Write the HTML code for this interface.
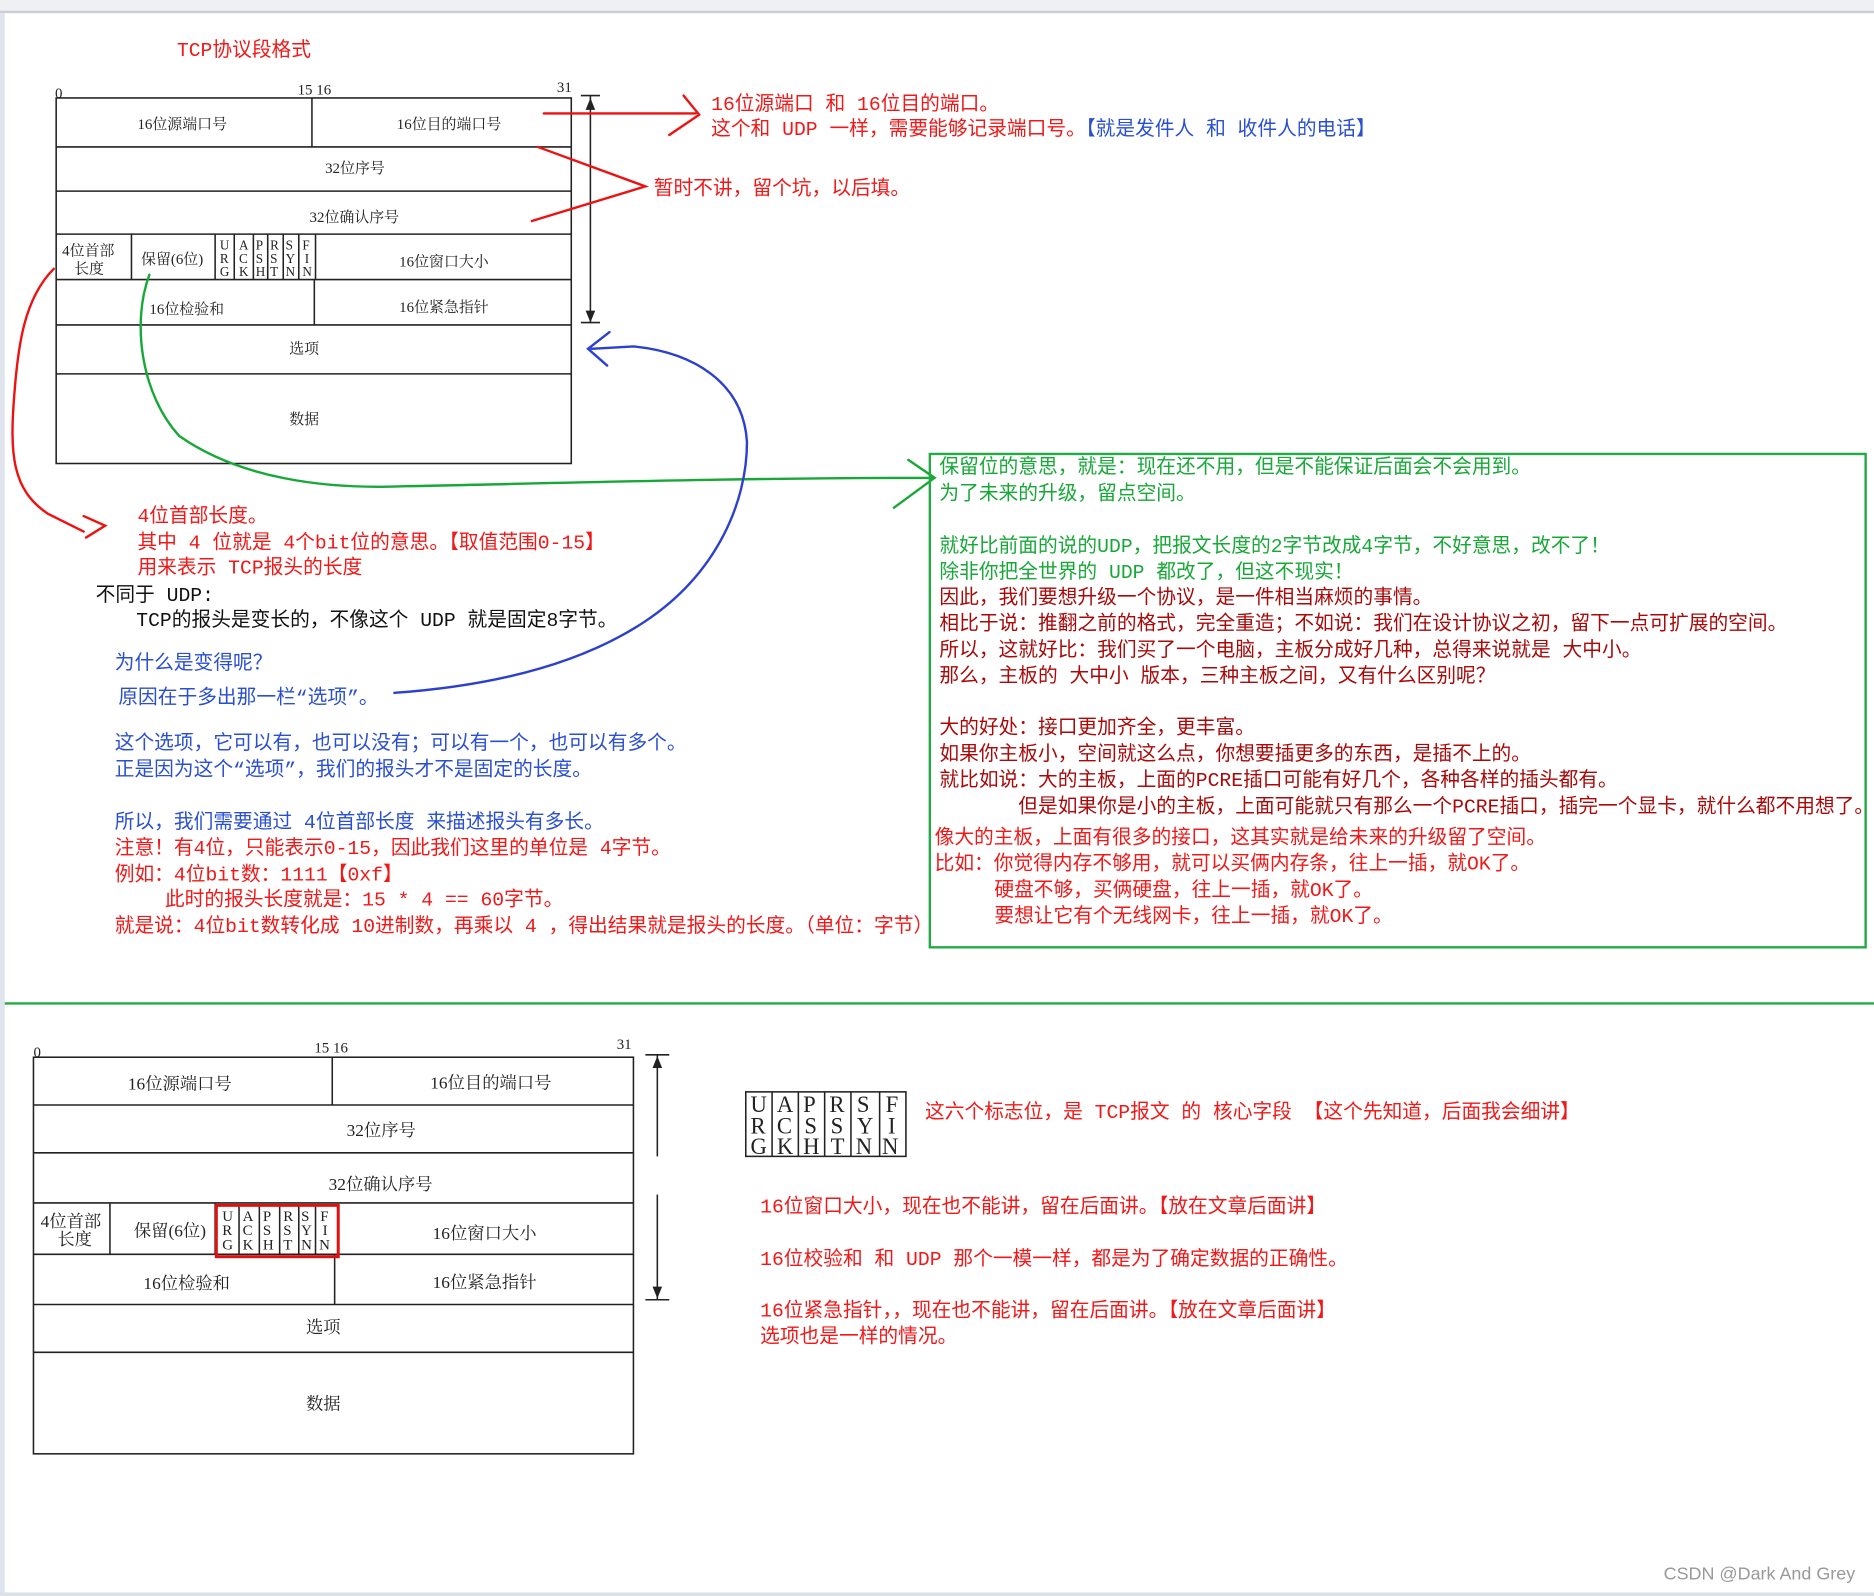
<!DOCTYPE html>
<html><head><meta charset="utf-8">
<style>
html,body{margin:0;padding:0;background:#fff;overflow:hidden}
#wrap{position:absolute;left:0;top:0;width:1568px;height:1336px;transform:scale(1.19515,1.1946);transform-origin:0 0;background:#fff;font-family:"Liberation Mono","Noto Sans CJK SC",monospace;font-size:16.5px;}
.t{position:absolute;white-space:pre;line-height:22px;height:22px}
.r{color:#f01818}.b{color:#2a4fd0}.g{color:#18a838}.k{color:#111}.d{color:#a80a0a}
svg{position:absolute;left:0;top:0}
.dg{font-family:"Liberation Serif","Noto Serif CJK SC",serif;fill:#222}
</style></head><body><div id="wrap">
<div style="position:absolute;left:0;top:0;width:1568px;height:9px;background:#eef0f4;border-bottom:2px solid #c9ced8"></div>
<div style="position:absolute;left:0;top:11px;width:4px;height:1325px;background:#dfe4ee"></div>

<svg width="1568" height="1336" viewBox="0 0 1568 1336">
<g stroke="#222" stroke-width="1.3" fill="none">
<rect x="47" y="82" width="431" height="306"/>
<line x1="47" y1="123" x2="478" y2="123"/><line x1="47" y1="160" x2="478" y2="160"/>
<line x1="47" y1="196" x2="478" y2="196"/><line x1="47" y1="234" x2="478" y2="234"/>
<line x1="47" y1="272" x2="478" y2="272"/><line x1="47" y1="313" x2="478" y2="313"/>
<line x1="261" y1="82" x2="261" y2="123"/><line x1="263" y1="234" x2="263" y2="272"/>
<line x1="110" y1="196" x2="110" y2="234"/><line x1="180" y1="196" x2="180" y2="234"/>
<line x1="196" y1="196" x2="196" y2="234"/><line x1="212" y1="196" x2="212" y2="234"/>
<line x1="224" y1="196" x2="224" y2="234"/><line x1="237" y1="196" x2="237" y2="234"/>
<line x1="250" y1="196" x2="250" y2="234"/><line x1="264" y1="196" x2="264" y2="234"/>
<line x1="494" y1="80" x2="494" y2="270"/><line x1="486" y1="80" x2="502" y2="80"/><line x1="486" y1="270" x2="502" y2="270"/>
<rect x="28" y="885" width="502" height="332"/>
<line x1="28" y1="925" x2="530" y2="925"/><line x1="28" y1="965" x2="530" y2="965"/>
<line x1="28" y1="1007" x2="530" y2="1007"/><line x1="28" y1="1050" x2="530" y2="1050"/>
<line x1="28" y1="1092" x2="530" y2="1092"/><line x1="28" y1="1132" x2="530" y2="1132"/>
<line x1="278" y1="885" x2="278" y2="925"/><line x1="280" y1="1050" x2="280" y2="1092"/>
<line x1="92" y1="1007" x2="92" y2="1050"/><line x1="180" y1="1007" x2="180" y2="1050"/>
<line x1="200" y1="1010" x2="200" y2="1050"/><line x1="217" y1="1010" x2="217" y2="1050"/><line x1="234" y1="1010" x2="234" y2="1050"/><line x1="250" y1="1010" x2="250" y2="1050"/><line x1="264" y1="1010" x2="264" y2="1050"/>
<line x1="550" y1="883" x2="550" y2="968"/><line x1="550" y1="1000" x2="550" y2="1088"/>
<line x1="540" y1="883" x2="560" y2="883"/><line x1="540" y1="1088" x2="560" y2="1088"/>
<rect x="624" y="914" width="134" height="54"/>
<line x1="646" y1="914" x2="646" y2="968"/><line x1="668" y1="914" x2="668" y2="968"/><line x1="690" y1="914" x2="690" y2="968"/><line x1="712" y1="914" x2="712" y2="968"/><line x1="736" y1="914" x2="736" y2="968"/>
</g>
<g fill="#222"><path d="M494 82 l-4 10 h8z"/><path d="M494 270 l-4 -10 h8z"/><path d="M550 884 l-4 10 h8z"/><path d="M550 1087 l-4 -10 h8z"/></g>
<rect x="181" y="1009" width="102" height="43" fill="none" stroke="#e01010" stroke-width="2.5"/>
<g class="dg" style="font-size:12.5px">
<text x="46" y="82">0</text><text x="249" y="79">15 16</text><text x="466" y="77">31</text>
<text x="115" y="108">16位源端口号</text><text x="332" y="108">16位目的端口号</text>
<text x="272" y="145">32位序号</text><text x="259" y="186">32位确认序号</text>
<text x="52" y="214">4位首部</text><text x="62" y="229">长度</text><text x="118" y="221">保留(6位)</text>
<text x="334" y="223">16位窗口大小</text><text x="125" y="263">16位检验和</text><text x="334" y="261">16位紧急指针</text>
<text x="242" y="296">选项</text><text x="242" y="355">数据</text>
<text x="28" y="885">0</text><text x="263" y="881">15 16</text><text x="516" y="878">31</text>
</g>
<g class="dg" style="font-size:14.5px">
<text x="107" y="912">16位源端口号</text><text x="360" y="911">16位目的端口号</text>
<text x="290" y="951">32位序号</text><text x="275" y="996">32位确认序号</text>
<text x="34" y="1027">4位首部</text><text x="48" y="1042">长度</text><text x="112" y="1035">保留(6位)</text>
<text x="362" y="1037">16位窗口大小</text><text x="120" y="1079">16位检验和</text><text x="362" y="1078">16位紧急指针</text>
<text x="256" y="1116">选项</text><text x="256" y="1180">数据</text>
</g>
<g class="dg" style="font-size:11px">
<text x="184" y="209">U</text><text x="184" y="220">R</text><text x="184" y="231">G</text>
<text x="200" y="209">A</text><text x="200" y="220">C</text><text x="200" y="231">K</text>
<text x="214" y="209">P</text><text x="214" y="220">S</text><text x="214" y="231">H</text>
<text x="226" y="209">R</text><text x="226" y="220">S</text><text x="226" y="231">T</text>
<text x="239" y="209">S</text><text x="239" y="220">Y</text><text x="239" y="231">N</text>
<text x="253" y="209">F</text><text x="255" y="220">I</text><text x="253" y="231">N</text>
</g>
<g class="dg" style="font-size:12.5px">
<text x="186" y="1022">U</text><text x="186" y="1034">R</text><text x="186" y="1046">G</text>
<text x="203" y="1022">A</text><text x="203" y="1034">C</text><text x="203" y="1046">K</text>
<text x="220" y="1022">P</text><text x="220" y="1034">S</text><text x="220" y="1046">H</text>
<text x="237" y="1022">R</text><text x="237" y="1034">S</text><text x="237" y="1046">T</text>
<text x="252" y="1022">S</text><text x="252" y="1034">Y</text><text x="252" y="1046">N</text>
<text x="268" y="1022">F</text><text x="270" y="1034">I</text><text x="267" y="1046">N</text>
</g>
<g class="dg" style="font-size:19px">
<text x="628" y="931">U</text><text x="628" y="949">R</text><text x="628" y="966">G</text>
<text x="650" y="931">A</text><text x="650" y="949">C</text><text x="650" y="966">K</text>
<text x="672" y="931">P</text><text x="673" y="949">S</text><text x="672" y="966">H</text>
<text x="694" y="931">R</text><text x="695" y="949">S</text><text x="695" y="966">T</text>
<text x="717" y="931">S</text><text x="717" y="949">Y</text><text x="716" y="966">N</text>
<text x="741" y="931">F</text><text x="743" y="949">I</text><text x="738" y="966">N</text>
</g>
<g fill="none" stroke-width="2" stroke-linecap="round">
<path d="M455 95 H582 M572 80 L585 96 L560 113" stroke="#ee1111"/>
<path d="M450 123 L540 156 L445 185" stroke="#ee1111"/>
<path d="M45 225 C20 250 15 290 12 330 C8 380 10 410 40 430 L70 445 M70 432 L88 440 L72 450" stroke="#ee1111"/>
<path d="M125 230 C110 270 118 330 150 365 C200 400 270 410 340 407 C450 405 600 400 780 400 M760 385 L782 400 L748 425" stroke="#18a838"/>
<path d="M330 580 C400 575 480 560 540 520 C600 480 625 420 625 370 C622 320 580 295 530 290 L495 292 M510 278 L492 292 L508 306" stroke="#2b3fd0"/>
</g>
<rect x="778" y="380" width="783" height="413" fill="none" stroke="#22aa44" stroke-width="2"/>
<line x1="4" y1="840" x2="1568" y2="840" stroke="#22aa44" stroke-width="2"/>
</svg>

<div class="t r" style="left:148px;top:32px">TCP协议段格式</div>
<div class="t r" style="left:595px;top:77px">16位源端口 和 16位目的端口。</div>
<div class="t r" style="left:595px;top:98px">这个和 UDP 一样，需要能够记录端口号。<span class="b">【就是发件人 和 收件人的电话】</span></div>
<div class="t r" style="left:547px;top:148px">暂时不讲，留个坑，以后填。</div>
<div class="t r" style="left:115px;top:422px">4位首部长度。</div>
<div class="t r" style="left:115px;top:444px">其中 4 位就是 4个bit位的意思。【取值范围0-15】</div>
<div class="t r" style="left:115px;top:465px">用来表示 TCP报头的长度</div>
<div class="t k" style="left:80px;top:488px">不同于 UDP:</div>
<div class="t k" style="left:114px;top:509px">TCP的报头是变长的，不像这个 UDP 就是固定8字节。</div>
<div class="t b" style="left:96px;top:545px">为什么是变得呢？</div>
<div class="t b" style="left:99px;top:574px">原因在于多出那一栏“选项”。</div>
<div class="t b" style="left:96px;top:612px">这个选项，它可以有，也可以没有；可以有一个，也可以有多个。</div>
<div class="t b" style="left:96px;top:634px">正是因为这个“选项”，我们的报头才不是固定的长度。</div>
<div class="t b" style="left:96px;top:678px">所以，我们需要通过 4位首部长度 来描述报头有多长。</div>
<div class="t r" style="left:96px;top:700px">注意！有4位，只能表示0-15，因此我们这里的单位是 4字节。</div>
<div class="t r" style="left:96px;top:722px">例如：4位bit数：1111【0xf】</div>
<div class="t r" style="left:138px;top:743px">此时的报头长度就是：15 * 4 == 60字节。</div>
<div class="t r" style="left:96px;top:765px">就是说：4位bit数转化成 10进制数，再乘以 4 ，得出结果就是报头的长度。（单位：字节）</div>

<div class="t g" style="left:786px;top:381px">保留位的意思，就是：现在还不用，但是不能保证后面会不会用到。</div>
<div class="t g" style="left:786px;top:403px">为了未来的升级，留点空间。</div>
<div class="t g" style="left:786px;top:447px">就好比前面的说的UDP，把报文长度的2字节改成4字节，不好意思，改不了！</div>
<div class="t g" style="left:786px;top:469px">除非你把全世界的 UDP 都改了，但这不现实！</div>
<div class="t d" style="left:786px;top:490px">因此，我们要想升级一个协议，是一件相当麻烦的事情。</div>
<div class="t d" style="left:786px;top:512px">相比于说：推翻之前的格式，完全重造；不如说：我们在设计协议之初，留下一点可扩展的空间。</div>
<div class="t d" style="left:786px;top:534px">所以，这就好比：我们买了一个电脑，主板分成好几种，总得来说就是 大中小。</div>
<div class="t d" style="left:786px;top:556px">那么，主板的 大中小 版本，三种主板之间，又有什么区别呢？</div>
<div class="t d" style="left:786px;top:599px">大的好处：接口更加齐全，更丰富。</div>
<div class="t d" style="left:786px;top:621px">如果你主板小，空间就这么点，你想要插更多的东西，是插不上的。</div>
<div class="t d" style="left:786px;top:643px">就比如说：大的主板，上面的PCRE插口可能有好几个，各种各样的插头都有。</div>
<div class="t d" style="left:852px;top:665px">但是如果你是小的主板，上面可能就只有那么一个PCRE插口，插完一个显卡，就什么都不用想了。</div>
<div class="t r" style="left:782px;top:691px">像大的主板，上面有很多的接口，这其实就是给未来的升级留了空间。</div>
<div class="t r" style="left:782px;top:713px">比如：你觉得内存不够用，就可以买俩内存条，往上一插，就OK了。</div>
<div class="t r" style="left:832px;top:735px">硬盘不够，买俩硬盘，往上一插，就OK了。</div>
<div class="t r" style="left:832px;top:757px">要想让它有个无线网卡，往上一插，就OK了。</div>

<div class="t r" style="left:774px;top:921px">这六个标志位，是 TCP报文 的 核心字段 【这个先知道，后面我会细讲】</div>
<div class="t r" style="left:636px;top:1000px">16位窗口大小，现在也不能讲，留在后面讲。【放在文章后面讲】</div>
<div class="t r" style="left:636px;top:1044px">16位校验和 和 UDP 那个一模一样，都是为了确定数据的正确性。</div>
<div class="t r" style="left:636px;top:1087px">16位紧急指针，，现在也不能讲，留在后面讲。【放在文章后面讲】</div>
<div class="t r" style="left:636px;top:1109px">选项也是一样的情况。</div>
<div class="t" style="left:1392px;top:1307px;color:#999;font-size:15px;font-family:'Liberation Sans',sans-serif">CSDN @Dark And Grey</div>
<div style="position:absolute;left:0;top:1333px;width:1568px;height:3px;background:#dde1e8"></div>
</div></body></html>
